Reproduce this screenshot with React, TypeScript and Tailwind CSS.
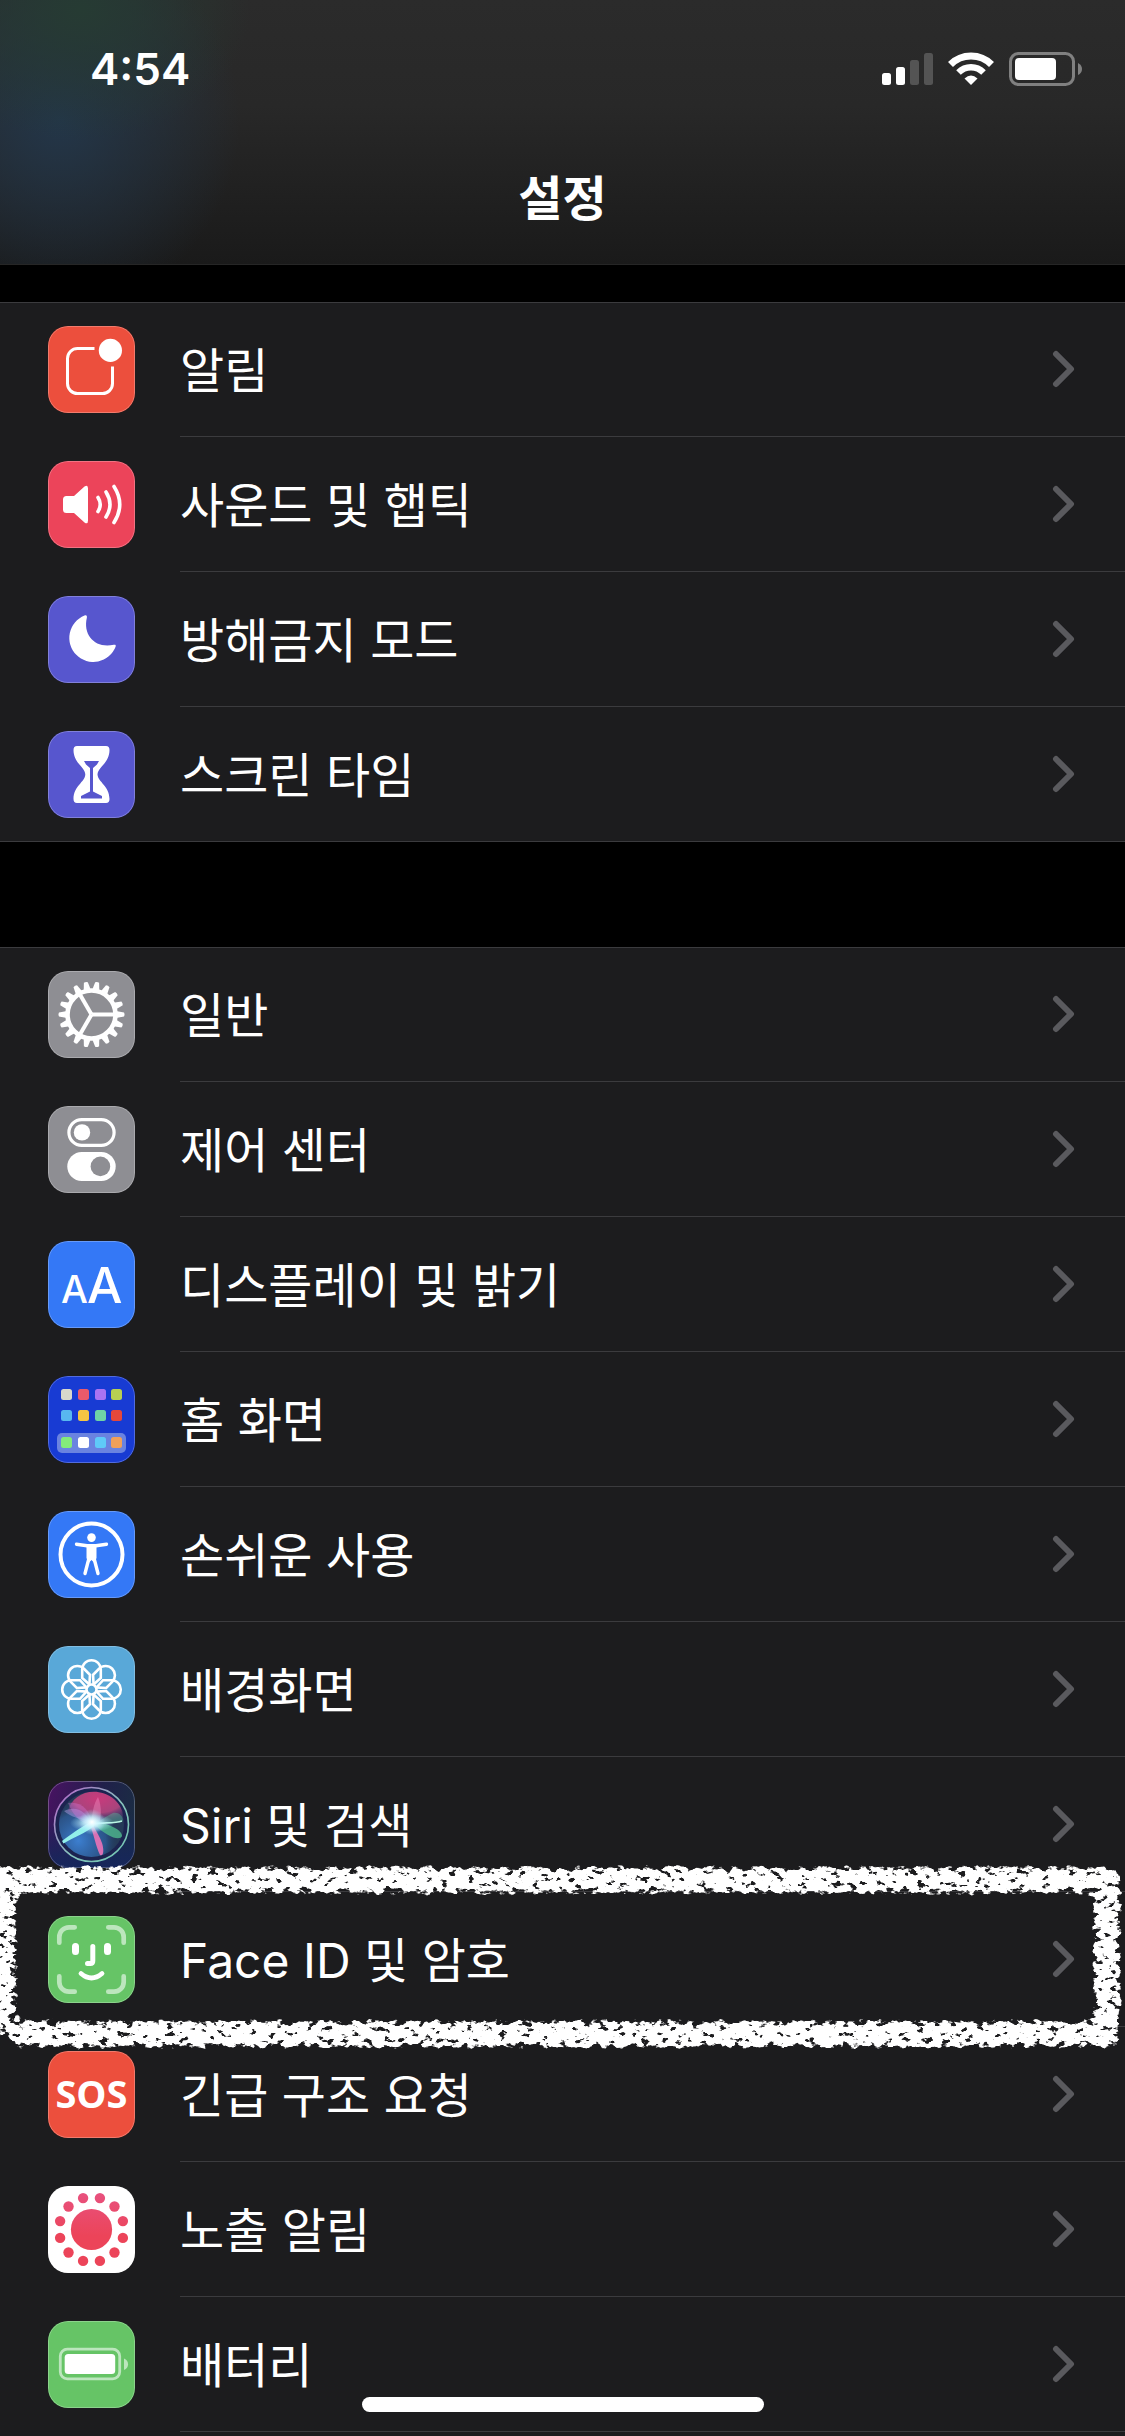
import type { ReactNode } from 'react';

interface SettingsItem {
    label: string;
    color: string;
    icon: ReactNode;
    highlighted?: boolean;
}

const GEAR_TEETH = Array.from({ length: 18 }, (_, i) => i * 20);
const PETALS = Array.from({ length: 8 }, (_, i) => i * 45);
const DOTS = Array.from({ length: 12 }, (_, i) => 15 + i * 30);

const HOME_APPS = [
    ['#d8d8cc', '#ea5a6a', '#ab73f2', '#b8cf52'],
    ['#58b8f0', '#f6c544', '#6fd3a6', '#e5483a'],
    ['#84ea7a', '#ffffff', '#5fcaf8', '#f0a05a'],
];
const HOME_COLS = [13, 30, 47, 63];
const HOME_ROWS = [13, 34, 61];

function NotificationIcon() {
    return (
        <>
            <path
                d="M46.5 22.6H29.5a10 10 0 0 0-10 10v25a10 10 0 0 0 10 10h25a10 10 0 0 0 10-10V40.5"
                fill="none"
                stroke="white"
                strokeWidth="3"
            />
            <circle cx="62.4" cy="24.4" r="11.6" fill="white" />
        </>
    );
}

function SoundIcon() {
    return (
        <>
            <path
                d="M18.5 35H26L36.5 25.6Q40 23.2 40 27.5V59.5Q40 63.8 36.5 61.4L26 52H18.5Q15 52 15 48.5V38.5Q15 35 18.5 35Z"
                fill="white"
            />
            <path
                d="M50 36.5Q54.5 43.5 50 50.5M58 31Q66 43.5 58 56M66 25.5Q77.5 43.5 66 61.5"
                fill="none"
                stroke="white"
                strokeWidth="3.6"
                strokeLinecap="round"
            />
        </>
    );
}

function MoonIcon() {
    return (
        <path
            d="M36.5 19.6A24 24 0 1 0 67.6 50.8C68.2 48.9 67.3 48.5 65.8 48.8C48 53 34.5 40 38.9 21.6C39.2 19.4 38 19 36.5 19.6Z"
            fill="white"
        />
    );
}

function HourglassIcon() {
    return (
        <>
            <path
                d="M29 15H58Q61.5 15 61.5 19C61.5 32 50 36 49.5 43.5C50 51 61.5 55 61.5 68Q61.5 72 58 72H29Q25.5 72 25.5 68C25.5 55 37 51 37.3 43.5C37 36 25.5 32 25.5 19Q25.5 15 29 15Z"
                fill="white"
            />
            <path d="M36 30H51L49 33.5L45 37V60.5L54 65V67.5H33V65L42 60.5V37L38 33.5Z" fill="#5756ce" />
        </>
    );
}

function GearIcon() {
    return (
        <g transform="translate(43.5 43.5)">
            <circle r="24" fill="none" stroke="white" strokeWidth="4.6" />
            {GEAR_TEETH.map((deg) => (
                <path key={deg} d="M24.5 -3.6L32.5 -2Q33.5 0 32.5 2L24.5 3.6Z" fill="white" transform={`rotate(${deg})`} />
            ))}
            {[0, 120, 240].map((deg) => (
                <path key={deg} d="M0 0H24" stroke="white" strokeWidth="4" transform={`rotate(${deg})`} />
            ))}
        </g>
    );
}

function ControlCenterIcon() {
    return (
        <>
            <rect x="20.9" y="13.6" width="45.2" height="25.8" rx="12.9" fill="none" stroke="white" strokeWidth="3.2" />
            <circle cx="34" cy="26.4" r="8.2" fill="white" />
            <rect x="19.3" y="46" width="48.4" height="29" rx="14.5" fill="white" />
            <circle cx="52.4" cy="60.4" r="9.8" fill="#8e8e93" />
        </>
    );
}

function TextSizeIcon() {
    return (
        <g fill="white" className="font-['Inter'] font-medium">
            <text x="13" y="62" fontSize="38">A</text>
            <text x="39" y="62" fontSize="50">A</text>
        </g>
    );
}

function HomeScreenIcon() {
    return (
        <>
            <rect x="9" y="57" width="69" height="20" rx="5" fill="#6a83e0" />
            {HOME_APPS.map((row, r) =>
                row.map((fill, c) => (
                    <rect key={fill} x={HOME_COLS[c]} y={HOME_ROWS[r]} width="11" height="11" rx="2.5" fill={fill} />
                ))
            )}
        </>
    );
}

function AccessibilityIcon() {
    return (
        <>
            <circle cx="43.5" cy="43.5" r="31" fill="none" stroke="white" strokeWidth="4" />
            <circle cx="43.5" cy="26.6" r="4.3" fill="white" />
            <path
                d="M28.5 33.3L39 34.8H48L58.5 33.3M37 62.5L41.3 46M50 62.5L45.7 46"
                fill="none"
                stroke="white"
                strokeWidth="3.4"
                strokeLinecap="round"
            />
            <path d="M38.5 34H48.5V47L46.5 52L43.5 49L40.5 52L38.5 47Z" fill="white" />
        </>
    );
}

function WallpaperIcon() {
    return (
        <g transform="translate(43.5 43.5)" fill="none" stroke="white" strokeWidth="2.6">
            <circle r="5" />
            {PETALS.map((deg) => (
                <path
                    key={deg}
                    d="M-1.5 -4.5L-9.3 -11.5V-20A9.3 9.3 0 0 1 9.3 -20V-11.5L1.5 -4.5"
                    transform={`rotate(${deg})`}
                />
            ))}
        </g>
    );
}

function SiriIcon() {
    return (
        <>
            <defs>
                <linearGradient id="siri-bg" x1="0" y1="0" x2="1" y2="0.3">
                    <stop offset="0" stopColor="#4a1263" />
                    <stop offset="0.6" stopColor="#20204a" />
                    <stop offset="1" stopColor="#1b2c44" />
                </linearGradient>
                <linearGradient id="siri-shade" x1="0" y1="0" x2="0" y2="1">
                    <stop offset="0.35" stopColor="#16265c" stopOpacity="0" />
                    <stop offset="1" stopColor="#16265c" />
                </linearGradient>
                <linearGradient id="siri-ring" x1="0" y1="0" x2="1" y2="1">
                    <stop offset="0" stopColor="#d06adf" />
                    <stop offset="0.55" stopColor="#9adfd0" />
                    <stop offset="1" stopColor="#7fe0c0" />
                </linearGradient>
                <radialGradient id="siri-pink" cx="0.55" cy="0.2" r="0.75">
                    <stop offset="0" stopColor="#c93a7c" />
                    <stop offset="0.6" stopColor="#a8447c" />
                    <stop offset="1" stopColor="#5a3478" stopOpacity="0.2" />
                </radialGradient>
                <radialGradient id="siri-blue" cx="0.3" cy="0.75" r="0.6">
                    <stop offset="0" stopColor="#3c7fd0" />
                    <stop offset="0.7" stopColor="#2e5f9e" stopOpacity="0.7" />
                    <stop offset="1" stopColor="#1d3b66" stopOpacity="0" />
                </radialGradient>
                <radialGradient id="siri-glow">
                    <stop offset="0" stopColor="white" />
                    <stop offset="0.35" stopColor="#d5f7ff" stopOpacity="0.75" />
                    <stop offset="1" stopColor="#a0e8ff" stopOpacity="0" />
                </radialGradient>
            </defs>
            <rect width="87" height="87" fill="url(#siri-bg)" />
            <rect width="87" height="87" fill="url(#siri-shade)" />
            <circle cx="43.5" cy="43.5" r="37" fill="#1c2350" stroke="url(#siri-ring)" strokeWidth="1.6" strokeOpacity="0.85" />
            <circle cx="43.5" cy="43.5" r="32.5" fill="#253a58" />
            <circle cx="43.5" cy="43.5" r="32.5" fill="url(#siri-blue)" />
            <path d="M20 30C24 12 48 4 66 18C76 27 77 38 72 40L43 43Z" fill="url(#siri-pink)" />
            <path d="M43 42C38 30 28 24 16 30C22 36 34 38 43 42Z" fill="#b7a0e8" fillOpacity="0.45" />
            <path d="M20 22C34 20 42 30 44 42C34 44 26 36 20 22Z" fill="#d67be0" fillOpacity="0.35" />
            <path d="M43 44C44 32 46 22 50 16C54 26 54 38 49 46Z" fill="#ff9fd0" fillOpacity="0.35" />
            <path d="M45 44C56 40 68 42 75 40C75 34 70 31 65 32C60 34 52 40 45 44Z" fill="#5cc0a0" fillOpacity="0.4" />
            <path d="M46 40C58 42 74 48 74 55C72 60 60 57 46 43Z" fill="#4fb98f" fillOpacity="0.8" />
            <path d="M42 44C46 54 48 66 52 74C56 76 56 68 54 62C52 56 48 50 45 44Z" fill="#d870b4" />
            <path d="M44 40C30 48 22 54 14 60L15.5 62.5C26 56 38 52 46 45Z" fill="#92f0ea" />
            <path d="M44 43C56 41 66 43 74 40" fill="none" stroke="#baf7e4" strokeWidth="1.6" />
            <ellipse cx="44" cy="42" rx="22" ry="9" fill="url(#siri-glow)" />
            <ellipse cx="44" cy="41" rx="13" ry="13" fill="url(#siri-glow)" />
        </>
    );
}

function FaceIdIcon() {
    return (
        <g fill="none" strokeLinecap="round">
            <path
                d="M11.3 26.7V21A9.7 9.7 0 0 1 21 11.3H26.7M60.3 11.3H66A9.7 9.7 0 0 1 75.7 21V26.7M75.7 60.3V66A9.7 9.7 0 0 1 66 75.7H60.3M26.7 75.7H21A9.7 9.7 0 0 1 11.3 66V60.3"
                stroke="#bce6bd"
                strokeWidth="4.7"
            />
            <path d="M27.5 30.5V35.5M59.5 30.5V35.5" stroke="white" strokeWidth="7" />
            <path d="M44.8 30.5V45Q44.8 47.5 42.3 47.5H39.5" stroke="white" strokeWidth="5" />
            <path d="M33 57.5Q43.5 66.5 54 57.5" stroke="white" strokeWidth="4.8" />
        </g>
    );
}

function SosIcon() {
    return (
        <text x="43.5" y="57" textAnchor="middle" fontSize="38" fill="white" className="font-['Open_Sans'] font-bold">
            SOS
        </text>
    );
}

function ExposureIcon() {
    return (
        <>
            <defs>
                <linearGradient id="exposure" gradientUnits="userSpaceOnUse" x1="0" y1="5" x2="0" y2="50">
                    <stop offset="0" stopColor="#e85280" />
                    <stop offset="1" stopColor="#ec4459" />
                </linearGradient>
            </defs>
            <circle cx="43.5" cy="43.5" r="20.6" fill="url(#exposure)" />
            {DOTS.map((deg) => (
                <circle
                    key={deg}
                    cx={43.5 + 32.5 * Math.cos((deg * Math.PI) / 180)}
                    cy={43.5 + 32.5 * Math.sin((deg * Math.PI) / 180)}
                    r="5.2"
                    fill="url(#exposure)"
                />
            ))}
        </>
    );
}

function BatteryIcon() {
    return (
        <>
            <rect x="12.3" y="28.2" width="59.4" height="29.6" rx="7" fill="none" stroke="#bce6bd" strokeWidth="2.8" />
            <rect x="16.7" y="33" width="50.5" height="20" rx="3.5" fill="white" />
            <path d="M76 37.5Q80 39 80 43.2T76 49Z" fill="#bce6bd" />
        </>
    );
}

const alertItems: SettingsItem[] = [
    { label: '알림', color: 'bg-[#ec4f3d]', icon: <NotificationIcon /> },
    { label: '사운드 및 햅틱', color: 'bg-[#ec445a]', icon: <SoundIcon /> },
    { label: '방해금지 모드', color: 'bg-[#5756ce]', icon: <MoonIcon /> },
    { label: '스크린 타임', color: 'bg-[#5756ce]', icon: <HourglassIcon /> },
];

const generalItems: SettingsItem[] = [
    { label: '일반', color: 'bg-[#8e8e93]', icon: <GearIcon /> },
    { label: '제어 센터', color: 'bg-[#8e8e93]', icon: <ControlCenterIcon /> },
    { label: '디스플레이 및 밝기', color: 'bg-[#3478f6]', icon: <TextSizeIcon /> },
    { label: '홈 화면', color: 'bg-[#183bd3]', icon: <HomeScreenIcon /> },
    { label: '손쉬운 사용', color: 'bg-[#3478f6]', icon: <AccessibilityIcon /> },
    { label: '배경화면', color: 'bg-[#59a8d8]', icon: <WallpaperIcon /> },
    { label: 'Siri 및 검색', color: 'bg-[#20204a]', icon: <SiriIcon /> },
    { label: 'Face ID 및 암호', color: 'bg-[#66c466]', icon: <FaceIdIcon />, highlighted: true },
    { label: '긴급 구조 요청', color: 'bg-[#ec4f3d]', icon: <SosIcon /> },
    { label: '노출 알림', color: 'bg-white', icon: <ExposureIcon /> },
    { label: '배터리', color: 'bg-[#66c466]', icon: <BatteryIcon /> },
];

// Hand-drawn chalk frame around the highlighted row
function ChalkFrame() {
    return (
        <svg
            className="absolute inset-x-0 -inset-y-8 z-10 w-full h-[199px] pointer-events-none"
            viewBox="0 0 1125 199"
            preserveAspectRatio="none"
            aria-hidden="true"
        >
            <defs>
                <filter id="chalk" filterUnits="userSpaceOnUse" x="-40" y="-20" width="1205" height="239" colorInterpolationFilters="sRGB">
                    <feTurbulence type="fractalNoise" baseFrequency="0.12 0.18" numOctaves="3" seed="7" result="noise" />
                    <feColorMatrix in="noise" type="matrix" values="0 0 0 0 1  0 0 0 0 1  0 0 0 0 1  1 0 0 0 0" result="grain" />
                    <feGaussianBlur in="SourceGraphic" stdDeviation="5" result="soft" />
                    <feComposite in="soft" in2="grain" operator="arithmetic" k1="1.5" k2="0" k3="0" k4="0" result="mix" />
                    <feColorMatrix in="mix" type="matrix" values="0 0 0 0 1  0 0 0 0 1  0 0 0 0 1  0 0 0 9 -4" />
                </filter>
            </defs>
            <g filter="url(#chalk)" fill="none" stroke="white" strokeWidth="28">
                <path d="M-20 20H1119" />
                <path d="M10 174H1119" />
                <path d="M3 20V174" />
                <path d="M1107 20V174" />
            </g>
        </svg>
    );
}

function SettingsRow({ item, divider }: { item: SettingsItem; divider: boolean }) {
    return (
        <li className="relative">
            <button type="button" className="flex items-center w-full h-[135px] pl-12 text-left">
                <span className={`relative shrink-0 size-[87px] rounded-[20px] overflow-hidden ${item.color}`}>
                    <svg className="size-full" viewBox="0 0 87 87" aria-hidden="true">
                        {item.icon}
                    </svg>
                    <span className="absolute inset-0 rounded-[20px] border border-white/25" />
                </span>
                <span
                    className={`flex flex-1 items-center justify-between self-stretch ml-[45px] pr-[50px] border-b ${
                        divider ? 'border-[#3b3b3e]' : 'border-transparent'
                    }`}
                >
                    <span className="pt-1 text-[48px] leading-[60px] text-white">{item.label}</span>
                    <svg className="w-6 h-10" viewBox="0 0 24 40" fill="none" aria-hidden="true">
                        <path d="M5 5L20 20L5 35" stroke="#5a5a5e" strokeWidth="6" strokeLinecap="round" strokeLinejoin="round" />
                    </svg>
                </span>
            </button>
            {item.highlighted && <ChalkFrame />}
        </li>
    );
}

function StatusIcons() {
    return (
        <div className="flex items-center gap-[15px]">
            {/* Signal */}
            <svg className="w-[51px] h-[34px]" viewBox="0 0 51 34" aria-hidden="true">
                <rect x="0" y="21" width="9" height="12" rx="2.5" fill="white" />
                <rect x="14" y="15" width="9" height="18" rx="2.5" fill="white" />
                <rect x="28" y="8" width="9" height="25" rx="2.5" fill="#545454" />
                <rect x="42" y="1" width="9" height="32" rx="2.5" fill="#545454" />
            </svg>

            {/* Wi-Fi */}
            <svg className="w-[46px] h-[34px]" viewBox="0 0 46 34" fill="none" stroke="white" aria-hidden="true">
                <path d="M2.5 12.5A29 29 0 0 1 43.5 12.5" strokeWidth="7" />
                <path d="M10.5 20.5A17.7 17.7 0 0 1 35.5 20.5" strokeWidth="6.5" />
                <path d="M16.500 26.5Q23 20.5 29.5 26.5L23 33Z" fill="white" stroke="none" />
            </svg>

            {/* Battery */}
            <svg className="w-[73px] h-[34px]" viewBox="0 0 73 34" aria-hidden="true">
                <rect x="1.5" y="1.5" width="63" height="31" rx="8" fill="none" stroke="#808080" strokeWidth="3" />
                <rect x="6" y="6" width="41" height="22" rx="4" fill="white" />
                <path d="M69 11Q73 13 73 17T69 23Z" fill="#808080" />
            </svg>
        </div>
    );
}

function SettingsGroup({ items, open = false }: { items: SettingsItem[]; open?: boolean }) {
    return (
        <section className={`bg-[#1c1c1e] border-[#3b3b3e] ${open ? 'flex-1 border-t' : 'border-y'}`}>
            <ul className="-my-px">
                {items.map((item, idx) => (
                    <SettingsRow key={item.label} item={item} divider={open || idx < items.length - 1} />
                ))}
            </ul>
        </section>
    );
}

export default function App() {
    return (
        <div className="flex flex-col min-h-screen overflow-hidden bg-black text-white font-['Inter','Noto_Sans_CJK_KR',sans-serif]">
            {/* Header */}
            <header className="h-[265px] border-b border-[#262626] bg-[radial-gradient(ellipse_170px_130px_at_80px_10px,#263b33_0%,transparent_100%),radial-gradient(ellipse_180px_190px_at_60px_120px,#233649_0%,transparent_100%),linear-gradient(to_bottom,#2b2b2b_0%,#282828_40%,#1a1a1a_100%)]">
                <div className="flex items-center justify-between h-[138px] pl-[90px] pr-[43px]">
                    <span className="text-[44px] leading-[54px] font-semibold">4:54</span>
                    <StatusIcons />
                </div>
                <h1 className="pt-[31px] text-center text-[48px] leading-[60px] font-semibold">설정</h1>
            </header>

            <main className="flex flex-col flex-1 gap-[105px] pt-[37px]">
                <SettingsGroup items={alertItems} />
                <SettingsGroup items={generalItems} open />
            </main>

            {/* Home indicator */}
            <div className="fixed bottom-6 left-1/2 z-20 w-[402px] h-[15px] -translate-x-1/2 rounded-full bg-white" />
        </div>
    );
}
